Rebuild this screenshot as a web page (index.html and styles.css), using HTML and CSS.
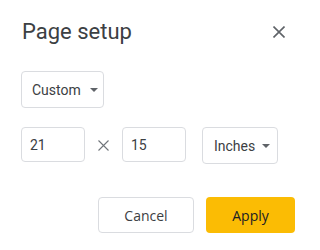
FILE: index.html
```html
<!DOCTYPE html>
<html lang="en">
<head>
<meta charset="utf-8">
<title>Page setup</title>
<link rel="stylesheet" href="styles.css">
</head>
<body>
<div class="dialog">
  <div class="header">
    <h1 class="title">Page setup</h1>
    <button class="close" aria-label="Close">
      <svg width="12" height="12" viewBox="0 0 12 12"><path d="M0.5 0.5L11.5 11.5M11.5 0.5L0.5 11.5" stroke="#5f6368" stroke-width="1.6" fill="none"/></svg>
    </button>
  </div>
  <div class="row-preset">
    <div class="select select-custom"><span>Custom</span><span class="caret"></span></div>
  </div>
  <div class="row-size">
    <div class="input">21</div>
    <svg class="times" width="11" height="11" viewBox="0 0 11 11"><path d="M0.5 0.5L10.5 10.5M10.5 0.5L0.5 10.5" stroke="#70757a" stroke-width="1.1" fill="none"/></svg>
    <div class="input">15</div>
    <div class="select select-units"><span>Inches</span><span class="caret"></span></div>
  </div>
  <div class="actions">
    <button class="btn btn-cancel">Cancel</button>
    <button class="btn btn-apply">Apply</button>
  </div>
</div>
</body>
</html>
```
FILE: styles.css
```css
html, body {
  margin: 0;
  padding: 0;
  background: #ffffff;
}
body {
  font-family: Roboto, "Liberation Sans", sans-serif;
  color: #3c4043;
}
.dialog {
  width: 316px;
  height: 250px;
  box-sizing: border-box;
  padding: 18px 21px 0 21px;
}
.header {
  display: flex;
  align-items: center;
  justify-content: space-between;
  height: 28px;
}
.title {
  margin: 0 0 0 1px;
  font-size: 22px;
  line-height: 28px;
  font-weight: 400;
  color: #3c4043;
}
.close {
  border: 0;
  background: none;
  padding: 0;
  width: 12px;
  height: 12px;
  margin-right: 10px;
  display: flex;
}
.row-preset {
  margin-top: 25px;
  display: flex;
}
.select {
  box-sizing: border-box;
  border: 1px solid #dadce0;
  border-radius: 4px;
  display: flex;
  align-items: center;
  font-size: 14px;
  color: #3c4043;
  padding-left: 10px;
}
.select-custom {
  width: 83px;
  height: 37px;
  gap: 9px;
}
.select-units {
  width: 76px;
  height: 37px;
  gap: 7px;
  padding-left: 11px;
  margin-left: 16px;
}
.caret {
  width: 0;
  height: 0;
  border-left: 4px solid transparent;
  border-right: 4px solid transparent;
  border-top: 4px solid #5f6368;
  margin-top: 1px;
}
.row-size {
  margin-top: 19px;
  display: flex;
  align-items: flex-start;
}
.input {
  box-sizing: border-box;
  width: 64px;
  height: 35px;
  border: 1px solid #dadce0;
  border-radius: 4px;
  display: flex;
  align-items: center;
  padding-left: 8px;
  font-size: 14px;
  color: #3c4043;
}
.times {
  margin: 13px 13px 0 13px;
}
.actions {
  margin-top: 33px;
  display: flex;
  justify-content: flex-end;
  gap: 12px;
}
.btn {
  box-sizing: border-box;
  height: 36px;
  border-radius: 4px;
  font-family: "Open Sans", Roboto, sans-serif;
  font-size: 14px;
  font-weight: 500;
  color: #3c4043;
  padding: 0;
}
.btn-cancel {
  width: 96px;
  background: #ffffff;
  border: 1px solid #dadce0;
}
.btn-apply {
  width: 89px;
  background: #fbbc04;
  border: 0;
  color: #202124;
}
```
